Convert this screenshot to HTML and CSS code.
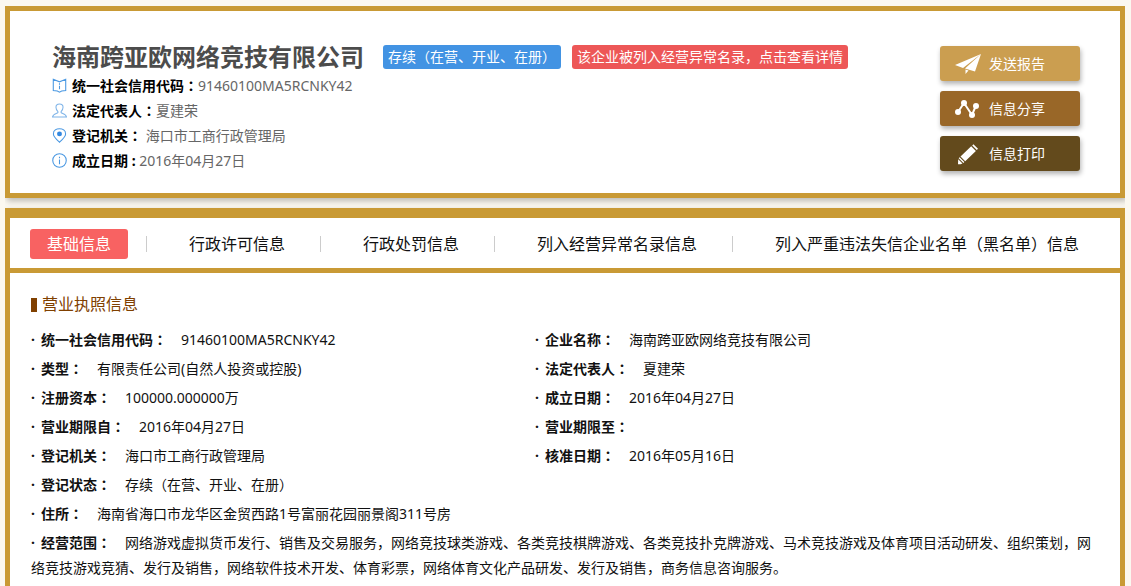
FILE: index.html
```html
<!DOCTYPE html>
<html lang="zh-CN">
<head>
<meta charset="utf-8">
<title>海南跨亚欧网络竞技有限公司</title>
<link rel="stylesheet" href="styles.css">
</head>
<body>
<header class="panel company">
  <div class="company-main">
    <div class="title-row">
      <h1 class="company-name">海南跨亚欧网络竞技有限公司</h1>
      <span class="badge badge-status">存续（在营、开业、在册）</span>
      <a class="badge badge-warning" href="#">该企业被列入经营异常名录，点击查看详情</a>
    </div>
    <ul class="facts">
      <li class="fact">
        <svg class="fact-icon" viewBox="0 0 14 14"><path d="M1.200 1.200 7 3.600 12.800 1.200V11.700L9 12.100 7 13.300 5 12.100 1.200 11.700z"/><path d="M7 5v1.200M7 7.200v3.300"/></svg>
        <span><b>统一社会信用代码<span class="mid" lang="zh-TW">：</span></b>91460100MA5RCNKY42</span>
      </li>
      <li class="fact">
        <svg class="fact-icon fact-icon-light" viewBox="0 0 14 14"><path d="M5.500 9V8C4 6.500 3.700 5 3.700 4c0-4 6.600-4 6.600 0 0 1-.300 2.500-1.800 4v1c1 1 4.500 1 5 4H.500c.500-3 4-3 5-4z"/></svg>
        <span><b>法定代表人<span class="mid" lang="zh-TW">：</span></b>夏建荣</span>
      </li>
      <li class="fact">
        <svg class="fact-icon" viewBox="0 0 14 14"><path d="M7 13.300C4 10.500 1.300 8 1.300 5.500 1.300-.900 12.700-.900 12.700 5.500 12.700 8 10 10.500 7 13.300z"/><circle class="solid" cx="7" cy="5.500" r="2.300"/></svg>
        <span><b>登记机关<span class="mid" lang="zh-TW">：</span></b> 海口市工商行政管理局</span>
      </li>
      <li class="fact">
        <svg class="fact-icon" viewBox="0 0 14 14"><circle cx="7" cy="7" r="6.300"/><path d="M7 3.500v1.300M7 6v4.500"/></svg>
        <span><b>成立日期 : </b>2016年04月27日</span>
      </li>
    </ul>
  </div>
  <div class="actions">
    <button class="action action-send" type="button">
      <svg class="action-icon" viewBox="0 0 26 22"><path d="M26 1 0 12l8 3zM26 1 10 15.500 20 18.500zM10.500 16.500l3 1-3 3.500z"/></svg>发送报告
    </button>
    <button class="action action-share" type="button">
      <svg class="action-icon" viewBox="0 0 26 22"><path class="line" d="M3 14 9 5l8 12 4-9.500"/><circle cx="3" cy="14" r="3"/><circle cx="9" cy="5" r="3"/><circle cx="17" cy="17" r="3"/><circle cx="21" cy="8" r="3"/></svg>信息分享
    </button>
    <button class="action action-print" type="button">
      <svg class="action-icon" viewBox="0 0 26 22"><path d="M17.200 2.400l1.200-1.200 4.600 4.600-1.200 1.200zM16.200 3.300l4.700 4.700L10.200 18.200 5.500 13.500zM4.700 14.300l4.700 4.700-1 1L3.700 15.300zM3.200 16.200l4.300 4.300-2 .8H3z"/></svg>信息打印
    </button>
  </div>
</header>

<main class="panel details">
  <nav class="tabs">
    <a class="tab tab-active" href="#">基础信息</a>
    <a class="tab" href="#">行政许可信息</a>
    <a class="tab" href="#">行政处罚信息</a>
    <a class="tab" href="#">列入经营异常名录信息</a>
    <a class="tab" href="#">列入严重违法失信企业名单（黑名单）信息</a>
  </nav>
  <section class="license">
    <h2 class="section-title">营业执照信息</h2>
    <dl class="fields">
      <div class="field"><dt>统一社会信用代码<span class="mid" lang="zh-TW">：</span></dt><dd>91460100MA5RCNKY42</dd></div>
      <div class="field"><dt>企业名称<span class="mid" lang="zh-TW">：</span></dt><dd>海南跨亚欧网络竞技有限公司</dd></div>
      <div class="field"><dt>类型<span class="mid" lang="zh-TW">：</span></dt><dd>有限责任公司(自然人投资或控股)</dd></div>
      <div class="field"><dt>法定代表人<span class="mid" lang="zh-TW">：</span></dt><dd>夏建荣</dd></div>
      <div class="field"><dt>注册资本<span class="mid" lang="zh-TW">：</span></dt><dd>100000.000000万</dd></div>
      <div class="field"><dt>成立日期<span class="mid" lang="zh-TW">：</span></dt><dd>2016年04月27日</dd></div>
      <div class="field"><dt>营业期限自<span class="mid" lang="zh-TW">：</span></dt><dd>2016年04月27日</dd></div>
      <div class="field"><dt>营业期限至<span class="mid" lang="zh-TW">：</span></dt><dd></dd></div>
      <div class="field"><dt>登记机关<span class="mid" lang="zh-TW">：</span></dt><dd>海口市工商行政管理局</dd></div>
      <div class="field"><dt>核准日期<span class="mid" lang="zh-TW">：</span></dt><dd>2016年05月16日</dd></div>
      <div class="field field-wide"><dt>登记状态<span class="mid" lang="zh-TW">：</span></dt><dd>存续（在营、开业、在册）</dd></div>
      <div class="field field-wide"><dt>住所<span class="mid" lang="zh-TW">：</span></dt><dd>海南省海口市龙华区金贸西路1号富丽花园丽景阁311号房</dd></div>
      <div class="field field-wide"><dt>经营范围<span class="mid" lang="zh-TW">：</span></dt><dd>网络游戏虚拟货币发行、销售及交易服务，网络竞技球类游戏、各类竞技棋牌游戏、各类竞技扑克牌游戏、马术竞技游戏及体育项目活动研发、组织策划，网络竞技游戏竞猜、发行及销售，网络软件技术开发、体育彩票，网络体育文化产品研发、发行及销售，商务信息咨询服务。</dd></div>
    </dl>
  </section>
</main>
</body>
</html>
```
FILE: styles.css
```css
* {
  box-sizing: border-box;
}

body {
  margin: 6px 6px 0 5px;
  background: #fbf8f0;
  color: #111;
  font: 14px/25px "Noto Sans", "Noto Sans CJK SC", sans-serif;
  text-spacing-trim: space-all;
}

h1, h2, ul, dl, dd {
  margin: 0;
  padding: 0;
}

/* Colon centred in its em square */
.mid {
  font-family: "Noto Sans CJK TC", sans-serif;
}

.panel {
  background: #fff;
  border: 5px solid #c99a35;
  box-shadow: 2px 3px 6px rgba(0, 0, 0, 0.25);
}

.company {
  display: flex;
  justify-content: space-between;
  align-items: flex-start;
  margin-bottom: 10px;
  padding: 30px 40px 20px 42px;
}

.title-row {
  display: flex;
  align-items: center;
  height: 32px;
}

.company-name {
  margin-right: 19px;
  color: #4c4c4c;
  font-size: 24px;
  line-height: 32px;
}

.badge {
  margin-right: 11px;
  padding: 0 5px;
  border-radius: 3px;
  color: #fff;
  line-height: 24px;
  text-decoration: none;
}

.badge-status {
  background: #4293e3;
}

.badge-warning {
  background: #ed5757;
}

.facts {
  list-style: none;
  color: #666;
}

.fact {
  display: flex;
  align-items: center;
  gap: 5px;
}

.fact b {
  color: #000;
}

.fact-icon {
  width: 15px;
  height: 15px;
  fill: none;
  stroke: #4a98e2;
}

.fact-icon-light {
  stroke: #7fb4e8;
}

.solid {
  fill: #3388e0;
  stroke: none;
}

.actions {
  display: flex;
  flex-direction: column;
  gap: 10px;
  padding-top: 5px;
}

.action {
  display: flex;
  align-items: center;
  gap: 8px;
  width: 140px;
  height: 35px;
  padding: 0 15px;
  border: 0;
  border-radius: 3px;
  box-shadow: 1px 3px 5px rgba(0, 0, 0, 0.3);
  color: #fff;
  font: inherit;
}

.action-send {
  background: #cb9e50;
}

.action-share {
  background: #996728;
}

.action-print {
  background: #634a1c;
}

.action-icon {
  width: 26px;
  height: 22px;
  fill: #fff;
}

.line {
  fill: none;
  stroke: #fff;
  stroke-width: 2;
}

.details {
  border-top-width: 10px;
}

.tabs {
  display: flex;
  align-items: center;
  gap: 1px;
  height: 55px;
  padding: 2px 20px 0;
  border-bottom: 5px solid #c99a35;
  font-size: 16px;
  white-space: nowrap;
}

.tab {
  padding: 0 17px;
  border-radius: 3px;
  color: #111;
  line-height: 30px;
  text-decoration: none;
}

.tab + .tab::before {
  content: "";
  display: inline-block;
  width: 1px;
  height: 16px;
  margin-right: 42px;
  background: #ccc;
  vertical-align: -2px;
}

.tab-active {
  background: #f86262;
  color: #fff;
}

.license {
  padding: 19px 20px 10px 21px;
}

.section-title {
  display: flex;
  align-items: center;
  gap: 5px;
  color: #804000;
  font-size: 16px;
  font-weight: normal;
}

.section-title::before {
  content: "";
  width: 6px;
  height: 14px;
  background: #804000;
}

.fields {
  display: grid;
  grid-template-columns: 33fr 37fr;
  row-gap: 4px;
  padding-top: 10px;
}

.field::before {
  content: "·";
  display: inline-block;
  width: 10px;
  font-weight: bold;
}

.field-wide {
  grid-column: 1 / -1;
}

.field dt,
.field dd {
  display: inline;
}

.field dt {
  font-weight: bold;
}

.field dd {
  padding-left: 14px;
}
```
